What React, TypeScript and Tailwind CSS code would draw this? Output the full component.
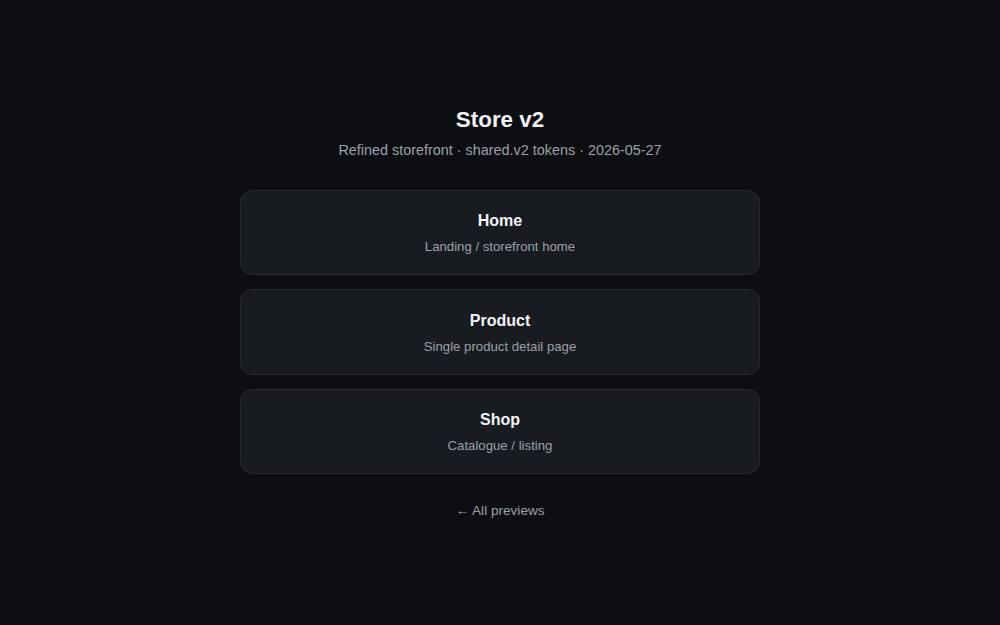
export default function App() {
  const pages = [
    { title: 'Home', desc: 'Landing / storefront home' },
    { title: 'Product', desc: 'Single product detail page' },
    { title: 'Shop', desc: 'Catalogue / listing' },
  ];

  return (
    <div
      className="min-h-screen bg-[#0d0e12] flex items-center justify-center text-[#e6e8eb]"
      style={{ fontFamily: '"Liberation Sans", Arial, sans-serif' }}
    >
      <div className="w-[520px] pt-[1px] flex flex-col items-center">
        <h1 className="text-[22.4px] leading-[28px] font-bold text-[#f2f3f5]">Store v2</h1>
        <p className="mt-[5px] text-[14.4px] leading-[22px] text-[#9ba1aa]">
          Refined storefront · shared.v2 tokens · 2026-05-27
        </p>

        <div className="mt-[29px] w-full flex flex-col gap-[14px]">
          {pages.map((p) => (
            <a
              key={p.title}
              href="#"
              className="block w-full h-[85.5px] pt-[2px] rounded-[12px] border border-[#262a31] bg-[#181b20] flex flex-col items-center justify-center hover:border-[#3a3f47]"
            >
              <div className="text-[16px] leading-[20px] font-bold text-[#f2f3f5]">{p.title}</div>
              <div className="mt-[7px] text-[13.2px] leading-[18px] text-[#9ba1aa]">{p.desc}</div>
            </a>
          ))}
        </div>

        <a href="#" className="mt-[28px] text-[13.6px] leading-[18px] text-[#9ba1aa]">
          ← All previews
        </a>
      </div>
    </div>
  );
}
